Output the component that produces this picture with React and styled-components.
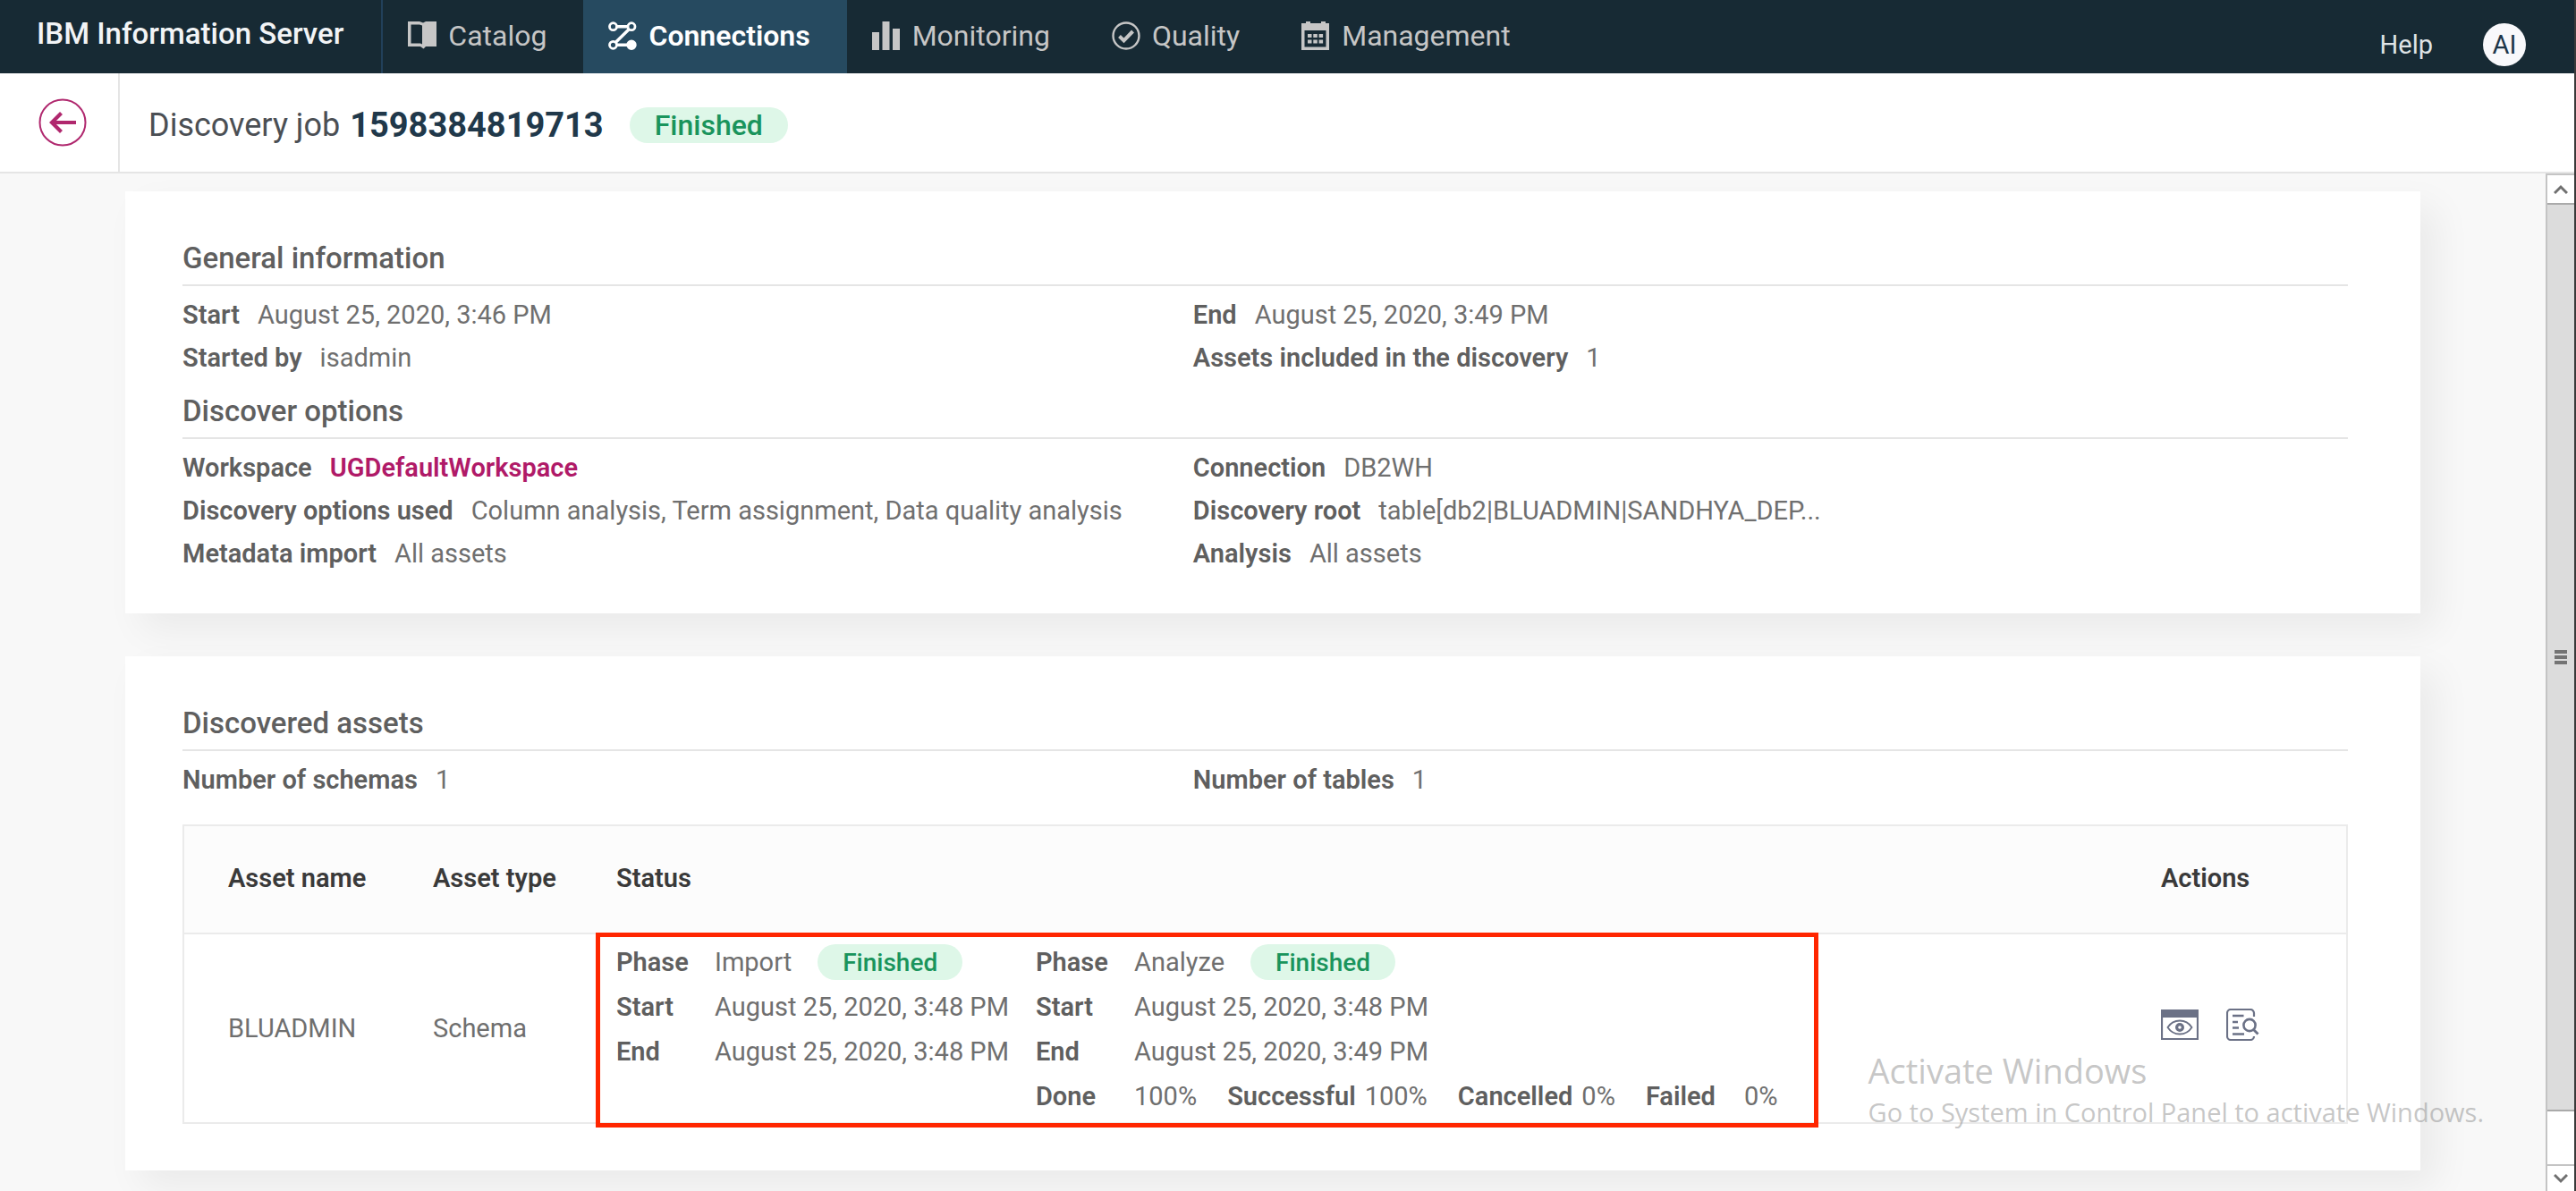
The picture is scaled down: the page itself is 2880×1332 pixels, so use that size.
import React from "react";
import styled, { createGlobalStyle } from "styled-components";

const Global = createGlobalStyle`
  * { box-sizing: border-box; }
  body { margin: 0; background: #f8f8f8; }
  button { font: inherit; border: 0; padding: 0; background: none; cursor: pointer; }
  a { text-decoration: none; color: inherit; }
`;

const Page = styled.div`
  position: relative;
  display: flex;
  flex-direction: column;
  height: 100vh;
  border-right: 2px solid #3a3a3a;
  background: #f8f8f8;
  color: #6f6f6f;
  font-family: Roboto, "Liberation Sans", sans-serif;
  font-size: 29px;
`;

/* ---------- top navigation ---------- */

const TopBar = styled.header`
  display: flex;
  flex: none;
  height: 82px;
  background: #172a34;
  color: #c6c6c6;
`;

const Brand = styled.a`
  display: flex;
  align-items: center;
  padding: 0 42px 8px 41px;
  border-right: 2px solid #22405a;
  color: #f2f4f6;
  font-size: 33px;
  font-weight: 500;
`;

const Nav = styled.nav`
  display: flex;
`;

const NavItem = styled.a`
  display: flex;
  align-items: center;
  gap: 13px;
  padding: 0 41px 3px 28px;
  font-size: 32px;
  font-weight: ${(p) => (p.$active ? 600 : 400)};
  color: ${(p) => (p.$active ? "#ffffff" : "#c6c6c6")};
  background: ${(p) => (p.$active ? "#264a60" : "transparent")};
`;

const NavIcon = styled.svg`
  width: 32px;
  height: 32px;
  flex: none;
`;

const Tools = styled.div`
  display: flex;
  align-items: center;
  gap: 56px;
  margin-left: auto;
  padding: 18px 54px 0 0;
`;

const HelpLink = styled.a`
  color: #dfe3e6;
`;

const Avatar = styled.button`
  width: 48px;
  height: 48px;
  border-radius: 50%;
  background: #f8f8fb;
  color: #1d3649;
`;

/* ---------- job header ---------- */

const JobBar = styled.div`
  display: flex;
  flex: none;
  height: 112px;
  background: #ffffff;
  border-bottom: 2px solid #e5e5e5;
`;

const BackCell = styled.div`
  display: flex;
  align-items: center;
  padding: 0 35px 0 43px;
  border-right: 2px solid #e5e5e5;
`;

const BackButton = styled.button`
  display: flex;
  width: 54px;
  height: 54px;
`;

const JobTitle = styled.h1`
  display: flex;
  align-items: center;
  gap: 11px;
  margin: 0;
  padding: 5px 0 0 32px;
  color: #4b4f54;
  font-size: 36px;
  font-weight: 400;
`;

const JobId = styled.strong`
  margin-right: 18px;
  color: #20384a;
  font-size: 38px;
  font-weight: 700;
`;

const Badge = styled.span`
  display: inline-flex;
  align-items: center;
  height: 40px;
  padding: 0 28px;
  border-radius: 20px;
  background: #def7e8;
  color: #1a945c;
  font-size: ${(p) => (p.$large ? "32px" : "28px")};
  font-weight: 500;
`;

/* ---------- content ---------- */

const Body = styled.div`
  display: flex;
  flex: 1;
  min-height: 0;
`;

const Content = styled.main`
  display: flex;
  flex: 1;
  flex-direction: column;
  gap: 48px;
  min-width: 0;
  padding: 20px 140px 24px;
  overflow-y: auto;
  scrollbar-width: none;
`;

const Card = styled.section`
  flex: none;
  padding: 39px 81px ${(p) => p.$bottom}px 64px;
  background: #ffffff;
  box-shadow: 18px 18px 40px rgba(0, 0, 0, 0.06);
`;

const Heading = styled.h2`
  margin: 0;
  padding-top: 7px;
  border-bottom: 2px solid #e5e5e5;
  color: #5f5f5f;
  font-size: 33px;
  font-weight: 500;
  line-height: 58px;
`;

const Facts = styled.dl`
  display: grid;
  grid-template-columns: 7fr 8fr;
  margin: 0;
  padding-top: 8px;
`;

const Fact = styled.div`
  display: flex;
  align-items: center;
  gap: 20px;
  height: 48px;
  white-space: nowrap;
`;

const Term = styled.dt`
  color: #5f5f5f;
  font-weight: 600;
`;

const Value = styled.dd`
  margin: 0;
`;

const WorkspaceLink = styled.a`
  color: #b01a68;
  font-weight: 600;
`;

/* ---------- assets table ---------- */

const Table = styled.table`
  width: 100%;
  margin-top: 26px;
  border: 2px solid #ebebeb;
  border-collapse: collapse;
  table-layout: fixed;
  text-align: left;
`;

const HeadCell = styled.th`
  width: ${(p) => p.$width};
  height: 121px;
  padding: 0 0 3px 49px;
  border-bottom: 2px solid #ebebeb;
  background: #fcfcfc;
  color: #3a3a3a;
  font-weight: 600;
`;

const Cell = styled.td`
  padding: 5px 0 5px 49px;
`;

const Phases = styled.div`
  position: relative;
  display: inline-flex;
  gap: 30px;
  padding-right: 46px;
  vertical-align: top;

  &::after {
    content: "";
    position: absolute;
    inset: -7px 0 -11px -23px;
    border: 5px solid #ff2600;
  }
`;

const Phase = styled.dl`
  margin: 0;
`;

const PhaseRow = styled.div`
  display: flex;
  align-items: center;
  gap: ${(p) => (p.$stats ? "34px" : "29px")};
  height: 50px;
  padding-top: 2px;
  white-space: nowrap;
`;

const Pair = styled.div`
  display: flex;
  align-items: center;
  gap: 10px;
`;

const PhaseTerm = styled(Term)`
  min-width: 100px;
`;

const Actions = styled.div`
  display: flex;
  align-items: center;
  gap: 31px;
  padding-bottom: 8px;
`;

const ActionButton = styled.button`
  display: flex;
  color: #6b7186;
`;

/* ---------- scroll rail ---------- */

const Rail = styled.div`
  display: flex;
  flex: none;
  flex-direction: column;
  width: 32px;
  border-left: 2px solid #c4c4c4;
  background: #ffffff;
`;

const RailButton = styled.button`
  display: flex;
  flex: none;
  align-items: center;
  justify-content: center;
  height: ${(p) => p.$size}px;
  border-top: 2px solid #c4c4c4;
`;

const RailTrack = styled.div`
  display: flex;
  flex: 1;
  flex-direction: column;
`;

const RailThumb = styled.div`
  display: flex;
  flex: 17;
  flex-direction: column;
  align-items: center;
  justify-content: center;
  gap: 2px;
  border-top: 2px solid #aaaaaa;
  border-bottom: 2px solid #aaaaaa;
  background: #dcdcdc;
`;

const Grip = styled.span`
  width: 14px;
  height: 4px;
  background: #747474;
`;

const RailRest = styled.div`
  flex: 1;
`;

const Watermark = styled.aside`
  position: absolute;
  right: 101px;
  bottom: 67px;
  color: rgba(150, 150, 150, 0.55);
  font-family: "Open Sans", "Noto Sans", sans-serif;
  font-size: 29px;
  line-height: 42px;
  pointer-events: none;
`;

const WatermarkTitle = styled.div`
  font-size: 38px;
  line-height: 52px;
`;

/* ---------- drawings ---------- */

const BookIcon = () => (
  <NavIcon viewBox="0 0 32 32" aria-hidden="true">
    <path fill="currentColor" fillRule="evenodd" d="M0 0h13l4 1.500L20 0h12v28H20l-2.500 2.500L14 28H0zM3.500 3.500v21H14l2 1V4.500l-3-1z" />
  </NavIcon>
);

const ConnectionsIcon = () => (
  <NavIcon viewBox="0 0 32 32" fill="none" stroke="currentColor" strokeWidth="2.8" aria-hidden="true">
    <circle cx="5.500" cy="5.700" r="4" />
    <circle cx="26" cy="5.700" r="4" />
    <circle cx="5.500" cy="26.300" r="4" />
    <circle cx="26" cy="26.300" r="4.300" fill="currentColor" />
    <path d="M9.500 5.700H22M23.200 8.700L8.400 23.300M9.500 26.300H22" strokeWidth="3.400" />
  </NavIcon>
);

const BarsIcon = () => (
  <NavIcon viewBox="0 0 32 32" fill="currentColor" aria-hidden="true">
    <path d="M0 12h8v20H0zM11.500 0h8v32h-8zM23 8h8v24h-8z" />
  </NavIcon>
);

const CheckIcon = () => (
  <NavIcon viewBox="0 0 32 32" fill="none" stroke="currentColor" aria-hidden="true">
    <circle cx="16" cy="16" r="14.500" strokeWidth="2.400" />
    <path d="M8.500 16.500l5 5L23.500 11" strokeWidth="4" />
  </NavIcon>
);

const CalendarIcon = () => (
  <NavIcon viewBox="0 0 32 32" fill="currentColor" aria-hidden="true">
    <path fillRule="evenodd" d="M0 2h5V0h5v2h12V0h5v2h4v30H0zM3.500 10v18.500h24V10z" />
    <path d="M7 14h4.500v4H7zM13.300 14h4.500v4h-4.500zM19.600 14h4.500v4h-4.500zM7 20.500h4.500v4H7zM13.300 20.500h4.500v4h-4.500zM19.600 20.500h4.500v4h-4.500z" />
  </NavIcon>
);

const BackIcon = () => (
  <svg width="54" height="54" viewBox="0 0 54 54" fill="none" stroke="#b0286e" aria-hidden="true">
    <circle cx="27" cy="27" r="25.500" strokeWidth="2" />
    <path d="M42 27H15.500M25.500 16.500L15 27L25.500 37.500" strokeWidth="4.200" />
  </svg>
);

const PreviewIcon = () => (
  <svg width="42" height="34" viewBox="0 0 42 34" fill="none" stroke="currentColor" aria-hidden="true">
    <path d="M0 0h42v9H0z" fill="currentColor" stroke="none" />
    <path d="M1 1h40v32H1z" strokeWidth="2.200" />
    <path d="M7.500 20C14 10 28 10 34.500 20C28 30 14 30 7.500 20z" strokeWidth="1.800" />
    <circle cx="21" cy="20" r="3.400" strokeWidth="3.200" />
  </svg>
);

const ReportIcon = () => (
  <svg width="37" height="36" viewBox="0 0 37 36" fill="none" stroke="currentColor" strokeWidth="2.200" aria-hidden="true">
    <path d="M31 9V5a4 4 0 0 0-4-4H5a4 4 0 0 0-4 4v26a4 4 0 0 0 4 4h22a4 4 0 0 0 4-4" />
    <path d="M7 8h12.500M7 15h6M7 21.500h7M7 28.500h13" strokeWidth="2.600" />
    <circle cx="26" cy="18.500" r="6.600" strokeWidth="2.600" />
    <path d="M30.500 23.500l5 5" strokeWidth="2.800" />
  </svg>
);

const Chevron = ({ down }) => (
  <svg width="16" height="12" viewBox="0 0 16 12" fill="none" stroke="#707070" strokeWidth="3" aria-hidden="true">
    <path d={down ? "M1 2l7 7l7-7" : "M1 10l7-7l7 7"} />
  </svg>
);

/* ---------- data ---------- */

const navItems = [
  { label: "Catalog", Icon: BookIcon },
  { label: "Connections", Icon: ConnectionsIcon, active: true },
  { label: "Monitoring", Icon: BarsIcon },
  { label: "Quality", Icon: CheckIcon },
  { label: "Management", Icon: CalendarIcon },
];

const general = [
  ["Start", "August 25, 2020, 3:46 PM"],
  ["End", "August 25, 2020, 3:49 PM"],
  ["Started by", "isadmin"],
  ["Assets included in the discovery", "1"],
];

const options = [
  ["Workspace", <WorkspaceLink href="#workspace">UGDefaultWorkspace</WorkspaceLink>],
  ["Connection", "DB2WH"],
  ["Discovery options used", "Column analysis, Term assignment, Data quality analysis"],
  ["Discovery root", "table[db2|BLUADMIN|SANDHYA_DEP..."],
  ["Metadata import", "All assets"],
  ["Analysis", "All assets"],
];

const counts = [
  ["Number of schemas", "1"],
  ["Number of tables", "1"],
];

const phases = [
  {
    name: "Import",
    rows: [
      [["Start", "August 25, 2020, 3:48 PM"]],
      [["End", "August 25, 2020, 3:48 PM"]],
    ],
  },
  {
    name: "Analyze",
    rows: [
      [["Start", "August 25, 2020, 3:48 PM"]],
      [["End", "August 25, 2020, 3:49 PM"]],
      [["Done", "100%"], ["Successful", "100%"], ["Cancelled", "0%"], ["Failed", "0%"]],
    ],
  },
];

const FactList = ({ items }) => (
  <Facts>
    {items.map(([term, value]) => (
      <Fact key={term}>
        <Term>{term}</Term>
        <Value>{value}</Value>
      </Fact>
    ))}
  </Facts>
);

const PhasePair = ({ term, value }) => (
  <Pair>
    <PhaseTerm>{term}</PhaseTerm>
    <Value>{value}</Value>
  </Pair>
);

export default function App() {
  return (
    <Page>
      <Global />
      <TopBar>
        <Brand href="#home">IBM Information Server</Brand>
        <Nav>
          {navItems.map(({ label, Icon, active }) => (
            <NavItem key={label} href={`#${label.toLowerCase()}`} $active={active}>
              <Icon />
              {label}
            </NavItem>
          ))}
        </Nav>
        <Tools>
          <HelpLink href="#help">Help</HelpLink>
          <Avatar type="button">AI</Avatar>
        </Tools>
      </TopBar>

      <JobBar>
        <BackCell>
          <BackButton type="button" aria-label="Back">
            <BackIcon />
          </BackButton>
        </BackCell>
        <JobTitle>
          Discovery job <JobId>1598384819713</JobId>
          <Badge $large>Finished</Badge>
        </JobTitle>
      </JobBar>

      <Body>
        <Content>
          <Card $bottom={43}>
            <Heading>General information</Heading>
            <FactList items={general} />
            <Heading>Discover options</Heading>
            <FactList items={options} />
          </Card>

          <Card $bottom={52}>
            <Heading>Discovered assets</Heading>
            <FactList items={counts} />
            <Table>
              <thead>
                <tr>
                  <HeadCell $width="230px">Asset name</HeadCell>
                  <HeadCell $width="205px">Asset type</HeadCell>
                  <HeadCell $width="auto">Status</HeadCell>
                  <HeadCell $width="257px">Actions</HeadCell>
                </tr>
              </thead>
              <tbody>
                <tr>
                  <Cell>BLUADMIN</Cell>
                  <Cell>Schema</Cell>
                  <Cell>
                    <Phases>
                      {phases.map((phase) => (
                        <Phase key={phase.name}>
                          <PhaseRow>
                            <PhasePair term="Phase" value={phase.name} />
                            <Badge>Finished</Badge>
                          </PhaseRow>
                          {phase.rows.map((row) => (
                            <PhaseRow key={row[0][0]} $stats={row.length > 1}>
                              {row.map(([term, value]) => (
                                <PhasePair key={term} term={term} value={value} />
                              ))}
                            </PhaseRow>
                          ))}
                        </Phase>
                      ))}
                    </Phases>
                  </Cell>
                  <Cell>
                    <Actions>
                      <ActionButton type="button" aria-label="Preview">
                        <PreviewIcon />
                      </ActionButton>
                      <ActionButton type="button" aria-label="View report">
                        <ReportIcon />
                      </ActionButton>
                    </Actions>
                  </Cell>
                </tr>
              </tbody>
            </Table>
          </Card>
        </Content>

        <Rail>
          <RailButton type="button" aria-label="Scroll up" $size={33}>
            <Chevron />
          </RailButton>
          <RailTrack>
            <RailThumb>
              <Grip />
              <Grip />
              <Grip />
            </RailThumb>
            <RailRest />
          </RailTrack>
          <RailButton type="button" aria-label="Scroll down" $size={30}>
            <Chevron down />
          </RailButton>
        </Rail>
      </Body>

      <Watermark>
        <WatermarkTitle>Activate Windows</WatermarkTitle>
        Go to System in Control Panel to activate Windows.
      </Watermark>
    </Page>
  );
}
